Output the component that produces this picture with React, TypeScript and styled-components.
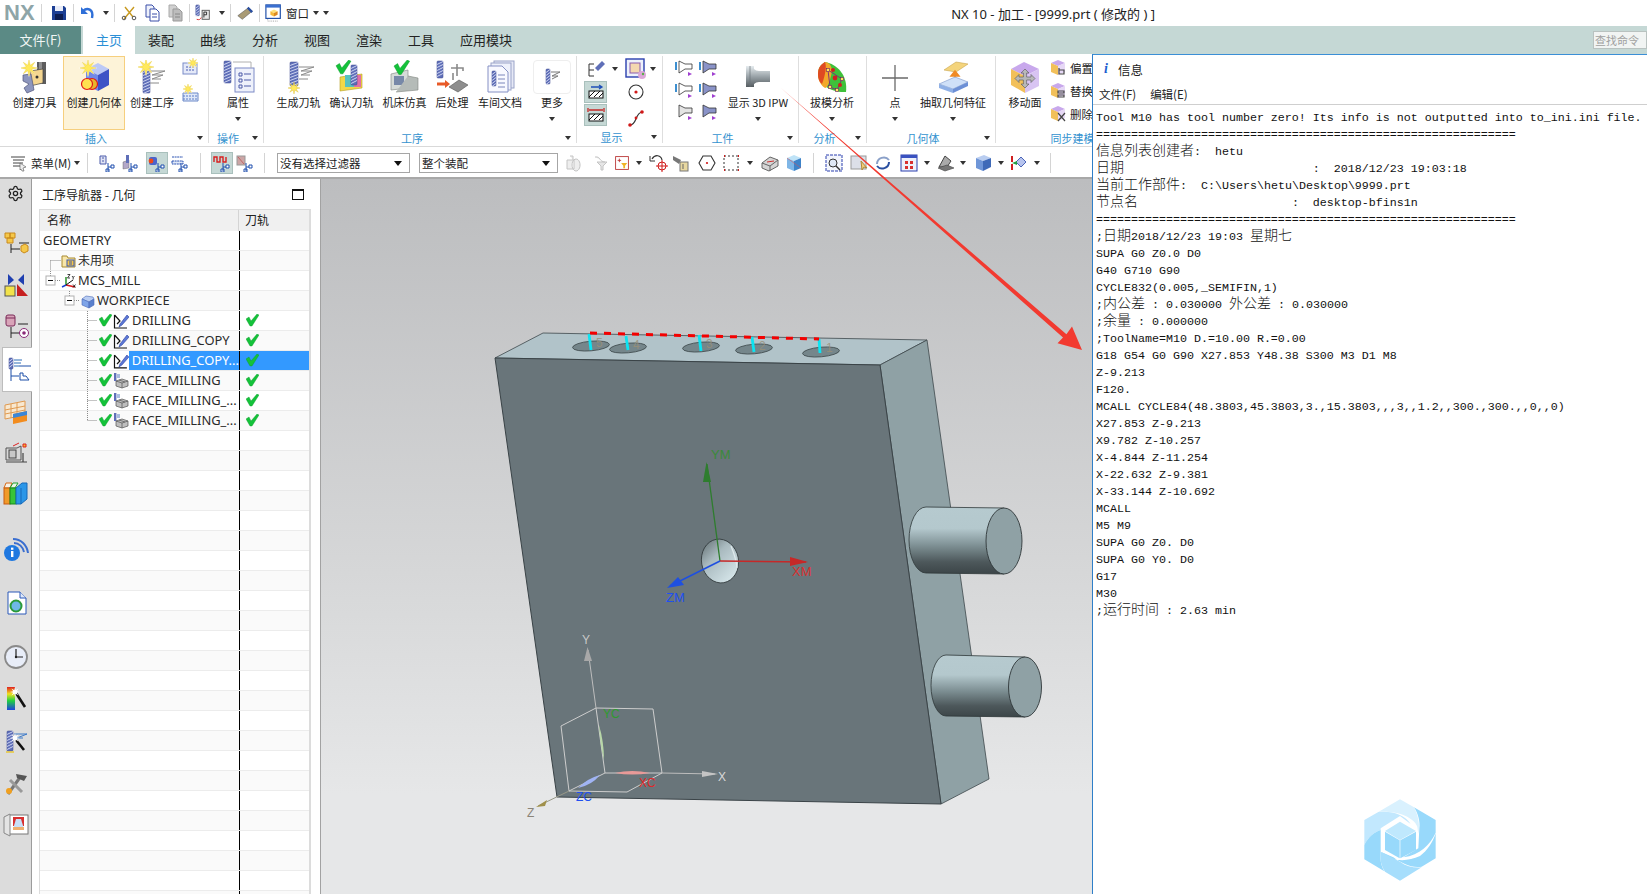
import React from "react";
import styled, { createGlobalStyle } from "styled-components";
import { Settings } from "lucide-react";

const Global = createGlobalStyle`
  html, body { margin: 0; padding: 0; background: #fff; overflow: hidden; }
  * { box-sizing: border-box; }
`;
const UI = `"Noto Sans CJK SC", "Liberation Sans", sans-serif`;

const Page = styled.div`
  position: relative; width: 1647px; height: 894px; overflow: hidden;
  display: flex; flex-direction: column; background: #fff; font-family: ${UI}; color: #222;
`;
/* title bar */
const TitleBar = styled.div`display: flex; align-items: center; height: 26px; flex: none; background: #fff;`;
const Logo = styled.div`width: 40px; padding-left: 4px; font: bold 22px/26px "Liberation Sans", sans-serif; color: #8ea5a8;`;
const Tool = styled.div<{ $w?: number; $ml?: number; $on?: boolean }>`
  flex: none; width: ${p => p.$w ?? 22}px; height: 22px; margin-left: ${p => p.$ml ?? 0}px;
  display: flex; align-items: center; justify-content: center;
  background: ${p => (p.$on ? "#c5d8d5" : "transparent")};
  border: 1px solid ${p => (p.$on ? "#a9c0bc" : "transparent")};
`;
const Sep = styled.div<{ $ml?: number; $h?: number }>`
  flex: none; width: 1px; height: ${p => p.$h ?? 18}px; margin-left: ${p => p.$ml ?? 0}px; background: #d4d4d4;
`;
const Caret = styled.span<{ $ml?: number }>`
  display: inline-block; flex: none; width: 0; height: 0; margin-left: ${p => p.$ml ?? 0}px;
  border-left: 3px solid transparent; border-right: 3px solid transparent; border-top: 4px solid #333;
`;
const QatText = styled.span`font-size: 11.5px; margin-left: 2px; line-height: 26px;`;
const Title = styled.div`margin-left: auto; padding-right: 492px; font: 13px "Noto Sans", "Noto Sans CJK SC", sans-serif; white-space: pre; color: #222;`;
/* tabs */
const TabRow = styled.div`display: flex; height: 28px; flex: none; background: #c5d8d5; align-items: flex-end;`;
const FileTab = styled.div`width: 81px; height: 28px; background: #5b8a85; color: #f2f6f5; font-size: 13px; line-height: 27px; text-align: center;`;
const Tab = styled.div<{ $on?: boolean }>`
  height: 28px; padding: 0 13px; margin-left: ${p => (p.$on ? 2 : 0)}px; font-size: 13px; line-height: 28px;
  background: ${p => (p.$on ? "#fff" : "transparent")}; color: ${p => (p.$on ? "#2b8fd6" : "#222")};
`;
const Search = styled.div`
  margin: 0 0 5px auto; width: 54px; height: 18px; border: 1px solid #b9c2c0; background: #f1f4f3;
  color: #a0a0a0; font-size: 11px; line-height: 16px; padding-left: 1px; white-space: nowrap; overflow: hidden;
`;
/* ribbon */
const Ribbon = styled.div`display: flex; height: 93px; flex: none; background: #fff; border-bottom: 1px solid #d9d9d9; padding-top: 2px; overflow: hidden;`;
const Group = styled.div<{ $w: number }>`
  flex: none; width: ${p => p.$w}px; height: 87px; display: flex; flex-direction: column; border-right: 1px solid #dedede;
`;
const GroupBody = styled.div<{ $pl?: number }>`display: flex; height: 74px; padding-left: ${p => p.$pl ?? 0}px;`;
const GroupFoot = styled.div`display: flex; align-items: center; height: 15px; font-size: 11px; color: #3392cf;`;
const FootText = styled.span`flex: 1; text-align: center; white-space: nowrap;`;
const FootCaret = styled.span`flex: none; width: 16px; display: flex; justify-content: center;`;
const BigBtn = styled.div<{ $w: number; $on?: boolean; $ml?: number }>`
  flex: none; width: ${p => p.$w}px; height: 74px; margin-left: ${p => p.$ml ?? 0}px; display: flex; flex-direction: column; align-items: center;
  padding-top: 3px; background: ${p => (p.$on ? "#fdf3d8" : "transparent")};
  border: 1px solid ${p => (p.$on ? "#f6cf7e" : "transparent")};
`;
const BigIcon = styled.div<{ $box?: boolean }>`
  width: ${p => (p.$box ? 38 : 34)}px; height: 34px; display: flex; align-items: center; justify-content: center;
  border: ${p => (p.$box ? "1px solid #eee" : "none")}; border-radius: 4px;
`;
const BigLabel = styled.div`font-size: 11px; line-height: 16px; white-space: nowrap;`;
const BtnCaret = styled.div`height: 12px; display: flex; align-items: center; justify-content: center; margin-top: 3px;`;
const SmallCol = styled.div<{ $w: number; $gap?: number; $pt?: number; $ml?: number; $start?: boolean }>`
  flex: none; width: ${p => p.$w}px; margin-left: ${p => p.$ml ?? 0}px; display: flex; flex-direction: column;
  align-items: ${p => (p.$start ? "flex-start" : "center")}; gap: ${p => p.$gap ?? 4}px; padding-top: ${p => p.$pt ?? 2}px;
`;
const SmallRow = styled.div`display: flex; align-items: center; height: 23px; font-size: 11.5px; white-space: nowrap; gap: 3px;`;
const ActiveCell = styled.div`
  width: 23px; height: 22px; background: #c5d8d5; border: 1px solid #a9c0bc; display: flex; align-items: center; justify-content: center;
`;
const Cell = styled.div<{ $mt?: number }>`width: 23px; height: 22px; margin-top: ${p => p.$mt ?? 0}px; display: flex; align-items: center; justify-content: center;`;
const SideCaret = styled(Caret)`margin-top: 11px;`;
/* toolbar */
const ToolBar = styled.div`display: flex; align-items: center; height: 32px; flex: none; background: #fff; border-bottom: 2px solid #a8a8a8; padding-top: 2px;`;
const MenuBtn = styled.div`flex: none; width: 86px; padding-left: 10px; display: flex; align-items: center; gap: 3px; font-size: 11.5px; white-space: nowrap;`;
const Select = styled.div<{ $w: number; $ml: number }>`
  flex: none; width: ${p => p.$w}px; height: 20px; margin-left: ${p => p.$ml}px; border: 1px solid #a6a6a6; background: #fff;
  font-size: 11.5px; line-height: 18px; padding: 0 7px 0 2px; display: flex; align-items: center; justify-content: space-between;
`;
const BlackCaret = styled(Caret)`border-left-width: 4px; border-right-width: 4px; border-top: 5px solid #111;`;
/* main */
const Main = styled.div`flex: 1; display: flex; min-height: 0;`;
const Side = styled.div`flex: none; width: 32px; background: #dcdcdc; border-right: 1px solid #9c9c9c; display: flex; flex-direction: column; align-items: stretch;`;
const SideItem = styled.div<{ $gap?: number; $on?: boolean }>`
  flex: none; height: ${p => (p.$on ? 45 : 28)}px; margin-top: ${p => p.$gap ?? 0}px; display: flex; align-items: center; justify-content: center;
  ${p => p.$on ? "background:#fff; margin-left:2px; margin-right:-1px; border:1px solid #bdbdbd; border-right:none;" : ""}
`;
const Panel = styled.div`flex: none; width: 288px; background: #fff; padding: 0 9px 0 7px; display: flex; flex-direction: column;`;
const PanelHead = styled.div`height: 30px; flex: none; display: flex; align-items: center; justify-content: space-between; padding: 0 7px 0 3px; font-size: 12px;`;
const MaxBox = styled.span`width: 12px; height: 11px; border: 1px solid #111; border-top-width: 2.5px; display: block;`;
const Table = styled.div`flex: 1; border: 1px solid #dcdcdc; overflow: hidden; min-height: 0; border-width: 1px 2px 0 1px;`;
const HeadRow = styled.div`display: flex; height: 21px; background: #f0f0f0; font-size: 12px; line-height: 20px;`;
const HeadName = styled.div`width: 199px; padding-left: 7px; border-right: 1px solid #d4d4d4;`;
const HeadPath = styled.div`padding-left: 6px;`;
const Row = styled.div<{ $alt: boolean }>`
  display: flex; height: 20px; background: ${p => (p.$alt ? "#fafafa" : "#fff")}; border-bottom: 1px solid #ececec;
`;
const NameCell = styled.div`flex: none; width: 200px; height: 19px; border-right: 1px solid #000; display: flex; align-items: center; white-space: nowrap; overflow: hidden;`;
const PathCell = styled.div<{ $sel?: boolean }>`flex: 1; height: 19px; display: flex; align-items: center; padding-left: 6px; background: ${p => (p.$sel ? "#3399ff" : "transparent")};`;
const Label = styled.div<{ $sel?: boolean; $ml?: number; $cjk?: boolean }>`
  margin-left: ${p => p.$ml ?? 1}px; padding-left: ${p => (p.$sel ? 3 : 0)}px; height: 19px; line-height: 18px;
  font: ${p => (p.$cjk ? `12px/18px "Noto Sans CJK SC", sans-serif` : `12.9px/18px "Noto Sans", "Noto Sans CJK SC", sans-serif`)};
  flex: ${p => (p.$sel ? 1 : "none")}; background: ${p => (p.$sel ? "#3399ff" : "transparent")}; color: ${p => (p.$sel ? "#fff" : "#2a2a2a")};
`;
const Viewport = styled.div`
  flex: 1; min-width: 0; border-left: 1px solid #a2a2a2; background: linear-gradient(#bcbdbf 0%, #d6d7d8 55%, #e6e7e8 86%, #e6e7e8 100%);
  display: flex;
`;
/* info window */
const InfoWin = styled.div`
  position: absolute; left: 1092px; top: 54px; right: 0; bottom: 0; background: #fff; border-left: 1px solid #2f7fc8; border-top: 1px solid #3b8fd6;
  display: flex; flex-direction: column;
`;
const InfoTitle = styled.div`height: 28px; flex: none; display: flex; align-items: center; padding-left: 11px; gap: 10px; font-size: 12.5px;`;
const InfoI = styled.span`font: italic bold 14px "Liberation Serif", serif; color: #1c5fd0;`;
const InfoMenu = styled.div`height: 22px; flex: none; display: flex; align-items: center; padding-left: 6px; gap: 14px; font-size: 11.5px; border-bottom: 1px solid #cfcfcf;`;
const InfoText = styled.div`flex: 1; padding: 5px 0 0 3px; font: 11.67px/17px "Liberation Mono", monospace; color: #111;`;
const Line = styled.div`height: 17px; white-space: pre; line-height: 17px;`;
const Cjk = styled.span`font: 14px/0 "Noto Sans CJK SC", sans-serif; font-weight: 300;`;
const Overlay = styled.svg`position: absolute; left: 0; top: 0; pointer-events: none;`;

const star = (cx: number, cy: number, r: number, n = 8) => {
  const p: string[] = [];
  for (let i = 0; i < n * 2; i++) {
    const a = (Math.PI * i) / n, k = i % 2 ? r * 0.38 : r;
    p.push(`${(cx + Math.cos(a) * k).toFixed(1)},${(cy + Math.sin(a) * k).toFixed(1)}`);
  }
  return p.join(" ");
};
const Star = ({ x, y, r = 8 }: { x: number; y: number; r?: number }) => (
  <g><polygon points={star(x, y, r + 1.5)} fill="#fff" /><polygon points={star(x, y, r)} fill="#ffe95c" stroke="#e8c93a" strokeWidth=".4" /></g>
);
const Bit = ({ x, y, w = 6, h = 22 }: { x: number; y: number; w?: number; h?: number }) => {
  const l = [];
  for (let i = 2; i < h; i += 3) l.push(<path key={i} d={`M${x} ${y + i + 1.5}L${x + w} ${y + i - 1.5}`} stroke="#d8def6" strokeWidth=".9" />);
  return <g><rect x={x} y={y} width={w} height={h} rx="1" fill="#5f6fb8" stroke="#39468c" strokeWidth=".5" />{l}</g>;
};
const Tick = ({ x, y, s = 1 }: { x: number; y: number; s?: number }) => (
  <path transform={`translate(${x} ${y}) scale(${s})`} d="M0 5 L3 3 L5 7 L11 0 L13 1 L6 12 L4 12 Z" fill="#14c23a" stroke="#0c9a2a" strokeWidth=".4" />
);
const Lines = ({ x, y }: { x: number; y: number }) => (
  <path transform={`translate(${x} ${y})`} d="M0 1H15L2 5H13L2 9H11M0 13H9" fill="none" stroke="#8a8a8a" strokeWidth="1" />
);
const V = ({ s = 34, b = 34, children }: { s?: number; b?: number; children: React.ReactNode }) => (
  <svg width={s} height={s} viewBox={`0 0 ${b} ${b}`}>{children}</svg>
);

/* ribbon big icons */
const ICreateTool = () => (<V>
  <rect x="19" y="2" width="9" height="22" fill="#5d5d5d" /><rect x="21" y="2" width="3" height="22" fill="#8e8e8e" />
  <polygon points="12,11 25,9 25,23 12,26" fill="#f3d590" stroke="#444" strokeWidth=".7" /><circle cx="19" cy="17" r="1.5" fill="#333" />
  <path d="M5 15 L13 14 L16 30 L9 33 L6 28 L11 24 L5 21Z" fill="#8d96bd" stroke="#50557a" strokeWidth=".7" />
  <Star x={11} y={8} />
</V>);
const ICreateGeom = () => (<V>
  <polygon points="9,9 21,3 32,9 21,15" fill="#bcc9f6" /><polygon points="9,9 21,15 21,31 9,25" fill="#7188e8" /><polygon points="21,15 32,9 32,25 21,31" fill="#3e53c6" />
  <Star x={11} y={8} />
  <circle cx="15" cy="24" r="5.5" fill="#e8b52a" stroke="#e01818" strokeWidth="1.2" /><circle cx="10" cy="24" r="5.5" fill="#ffe14f" stroke="#e01818" strokeWidth="1.2" />
</V>);
const ICreateOp = () => (<V><Bit x={8} y={6} w={7} h={27} /><Lines x={15} y={10} /><Star x={11} y={7} /></V>);
const IAttr = () => (<V>
  <rect x="14" y="8" width="19" height="24" fill="#eef1fb" stroke="#7d8ac6" />
  <path d="M18 13h3v3h-3zM18 19h3v3h-3zM18 25h3v3h-3zM23 14h7M23 20h7M23 26h7" fill="none" stroke="#4d5aa8" />
  <path d="M12 2H30V8" fill="none" stroke="#b0b0b0" /><Bit x={3} y={1} w={7} h={22} />
</V>);
const IGen = () => (<V><Bit x={8} y={2} w={8} h={24} /><Lines x={17} y={6} /><polygon points={star(12, 28, 6)} fill="#ffe95c" stroke="#d8b830" strokeWidth=".4" /></V>);
const IVerify = () => (<V>
  <polygon points="5,17 27,14 27,28 5,31" fill="#f2d848" stroke="#b79f20" strokeWidth=".6" /><rect x="10" y="15" width="14" height="12" fill="#58c2c0" /><rect x="19" y="15" width="7" height="12" fill="#e070a8" />
  <Bit x={16} y={5} w={6} h={20} /><Tick x={1} y={0} s={1.15} />
</V>);
const ISim = () => (<V>
  <polygon points="3,14 20,10 20,28 3,30" fill="#d6dbd8" stroke="#8b918e" strokeWidth=".7" /><rect x="6" y="16" width="10" height="9" fill="#7788a8" /><path d="M20 16 L30 18 L30 30 L8 32" fill="#b5bbb8" stroke="#80857f" strokeWidth=".6" />
  <Tick x={6} y={0} s={1.2} />
</V>);
const IPost = () => (<V>
  <Bit x={2} y={1} w={6} h={17} /><path d="M2 24h9" stroke="#e85a28" strokeWidth="3" /><path d="M10 20l5 4-5 4z" fill="#e85a28" />
  <path d="M16 8h12v3M22 4v12M18 13v7" fill="none" stroke="#8a8a8a" strokeWidth="1.6" /><polygon points="14,27 24,20 33,25 23,32" fill="#8e8e8e" stroke="#555" strokeWidth=".6" />
</V>);
const IDoc = () => (<V>
  <rect x="11" y="1" width="20" height="27" fill="#e6e9f6" stroke="#9aa3c8" /><rect x="8" y="3" width="20" height="27" fill="#eef1fb" stroke="#9aa3c8" />
  <path d="M5 6h14l6 6v20H5z" fill="#f8f9ff" stroke="#8590c4" /><Bit x={9} y={11} w={4} h={15} /><path d="M15 15h7M15 19h7M15 23h7M15 27h7" stroke="#7b86bb" />
</V>);
const IMore = () => (<V s={22} b={22}><Bit x={5} y={3} w={4} h={15} /><path d="M10 6H19L11 10H17L11 13" fill="none" stroke="#777" /></V>);
const IIpw = () => (<V>
  <defs><linearGradient id="ipw" x1="0" y1="0" x2="0" y2="1"><stop offset="0" stopColor="#e6ecef" /><stop offset=".5" stopColor="#9aa3a8" /><stop offset="1" stopColor="#555c60" /></linearGradient></defs>
  <path d="M5 6 H13 V9 Q15 11 18 11 H29 V22 H18 Q15 22 13 24 V27 H5 Z" fill="url(#ipw)" /><path d="M9 6V27" stroke="#6a7378" strokeWidth=".7" />
</V>);
const IDraft = () => (<V>
  <path d="M10 2 C22 4 33 15 31 32 C16 33 3 24 3 14 C3 9 5 5 10 2Z" fill="#3fc03a" /><path d="M10 2 C16 3 18 8 16 16 C14 24 12 28 10 28 C4 24 3 18 3 14 C3 9 5 5 10 2Z" fill="#f2a82a" /><path d="M10 2C12 6 10 16 7 24C4 22 3 18 3 14C3 9 5 5 10 2Z" fill="#df4a22" />
  <path d="M13 10L27 19L22 30L15 27Z" fill="none" stroke="#7a2a7a" strokeWidth=".9" />
  {[[13, 10], [27, 19], [22, 30], [15, 27]].map(([x, y]) => <rect key={x} x={x - 1.5} y={y - 1.5} width="3" height="3" fill="#ffe95c" stroke="#6a1a6a" strokeWidth=".6" />)}
  <circle cx="20" cy="18" r="2.4" fill="#d02020" /><circle cx="25" cy="25" r="2" fill="#d02020" /><circle cx="18" cy="10" r="2" fill="#d02020" />
</V>);
const IPoint = () => (<V><path d="M17 5V31M4 18H30" stroke="#6a6a6a" strokeWidth="1.3" fill="none" /></V>);
const IExtract = () => (<V>
  <polygon points="8,10 20,2 32,4 20,12" fill="#f4d47c" stroke="#c9a44a" strokeWidth=".6" /><path d="M19 23V13M15 16l4-5 4 5z" fill="#f08a24" stroke="#f08a24" strokeWidth="1.5" />
  <polygon points="3,24 19,17 32,22 17,29" fill="#cfe0f8" stroke="#7a96c8" strokeWidth=".6" /><polygon points="3,24 17,29 17,33 3,28" fill="#8fb0e6" /><polygon points="17,29 32,22 32,26 17,33" fill="#6d90d6" />
</V>);
const IMove = () => (<V>
  <polygon points="3,9 16,2 31,9 17,16" fill="#c8a8ec" /><polygon points="3,9 17,16 17,33 3,25" fill="#f2c05a" /><polygon points="17,16 31,9 31,26 17,33" fill="#d8c4f2" />
  <path d="M17 9l4 4h-2.4v4H23v-2.5l4 4-4 4V20h-4.4v4H21l-4 4-4-4h2.4v-4H11v2.5l-4-4 4-4V17h4.4v-4H13z" fill="#b8b8b8" stroke="#555" strokeWidth=".6" />
</V>);
const ISyncS = ({ mark }: { mark: string }) => (<V s={17} b={17}>
  <polygon points="1,4 8,1 15,4 8,7" fill="#c8a8ec" /><polygon points="1,4 8,7 8,16 1,13" fill="#f2c05a" /><polygon points="8,7 15,4 15,13 8,16" fill="#e6d8f6" />
  <path d={mark} fill="none" stroke="#444" strokeWidth="1.2" />
</V>);
/* small ribbon icons */
const IMini1 = () => (<V s={20} b={20}><rect x="2" y="6" width="14" height="11" fill="#e4e9f8" stroke="#7b8bc8" /><path d="M5 10h8M5 13h8" stroke="#4a5cb0" strokeDasharray="2 1" /><Star x={12} y={6} r={5} /></V>);
const IMini2 = () => (<V s={20} b={20}><path d="M2 10H17V18H2Z" fill="#dfe8f8" stroke="#6a88c8" /><path d="M2 13H17M2 16H17" stroke="#5a7cc8" strokeDasharray="2 1" /><Star x={7} y={6} r={5} /></V>);
const IShow1 = () => (<V s={20} b={20}><path d="M8 5H3V11H8M3 11V17H8" fill="none" stroke="#333" /><path d="M9 9L16 2L19 5L12 12Z" fill="#5f6fb8" /></V>);
const IShow2 = () => (<V s={22} b={22}><rect x="1" y="1" width="18" height="18" fill="#eef2fb" stroke="#2a3fae" strokeWidth="1.4" /><rect x="5" y="5" width="10" height="10" fill="#f4d8b0" stroke="#8a5ab0" /><circle cx="17" cy="17" r="4" fill="#dca8d8" /><circle cx="18" cy="16" r="1.2" fill="#58b048" /></V>);
const IHatch = ({ arrow }: { arrow: string }) => (<V s={20} b={20}>
  <path d={arrow} fill="none" stroke={arrow.startsWith("M2 3") ? "#c62828" : "#1e4fb8"} strokeWidth="1.3" />
  <rect x="3" y="9" width="14" height="7" fill="#fff" stroke="#111" /><path d="M3 15l6-6M8 15l6-6M13 15l4-4" stroke="#111" />
</V>);
const ICircle = () => (<V s={20} b={20}><circle cx="10" cy="10" r="7" fill="#fff" stroke="#333" strokeWidth="1.1" /><circle cx="10" cy="10" r="1.6" fill="#d01818" /></V>);
const ICurve = () => (<V s={20} b={20}><path d="M4 17C11 17 9 5 16 4" fill="none" stroke="#333" strokeWidth="1.2" /><circle cx="4" cy="17" r="1.8" fill="#d01818" /><circle cx="16" cy="4" r="1.8" fill="#d01818" /><circle cx="10" cy="10" r="1.4" fill="#d01818" /></V>);
const IWork = ({ c, t }: { c: string; t?: boolean }) => (<V s={20} b={20}>
  {t && <path d="M1 4V12" stroke="#3d8fd0" strokeWidth="2" />}
  <path d="M4 3L10 6H17V11H10L4 15Z" fill={c} stroke="#333" strokeWidth=".8" /><path d="M13 14l4 2-4 2z" fill="#a040d0" />
</V>);
/* toolbar icons */
const Nodes = ({ x = 8, y = 9 }: { x?: number; y?: number }) => (
  <path transform={`translate(${x} ${y})`} d="M2 0V8M2 4H5M0 6h3v3h-3zM5 2h3v3h-3z" fill="#fff" stroke="#1f4fae" />
);
const TTree = ({ kind }: { kind: number }) => (<V s={18} b={18}>
  {kind === 0 && <path d="M2 2h6v8H2zM4 4h2M4 7h2" fill="#dfe3f4" stroke="#4c5cab" />}
  {kind === 1 && <g><polygon points="2,8 8,6 8,14 2,15" fill="#b3a8c8" stroke="#555" strokeWidth=".4" /><rect x="5" y="1" width="3" height="8" fill="#5f6fb8" /></g>}
  {kind === 2 && <g><rect x="1" y="3" width="8" height="8" rx="2" fill="#4a64cc" /><circle cx="3" cy="7" r="2.4" fill="#f04818" /></g>}
  {kind === 3 && <path d="M1 3H12M1 7H12V10H1Z" fill="#dfe8f8" stroke="#2b52b2" strokeDasharray="2 .6" />}
  {kind === 4 && <path d="M1 8V3H4V8H7V3H10V8H13V3" fill="none" stroke="#d82020" strokeWidth="1.4" />}
  {kind === 5 && <g opacity=".75"><rect x="1" y="2" width="8" height="9" fill="#b88" stroke="#777" /><path d="M2 3l6 7" stroke="#a33" /></g>}
  <Nodes />
</V>);
const TGray1 = () => (<V s={18} b={18}><path d="M2 6h7v9H2zM5 2h3v4M11 5a4 6 0 1 0 .1 0" fill="#eee" stroke="#c4c4c4" /></V>);
const TGray2 = () => (<V s={18} b={18}><path d="M2 3C8 2 6 8 12 8M14 8H4L8 12V16H10V12Z" fill="#e6e6e6" stroke="#c4c4c4" /></V>);
const TFilter = () => (<V s={16} b={16}><rect x=".7" y=".7" width="14.6" height="14.6" fill="#fff" stroke="#b83232" /><path d="M3 5h4M5 3v4" stroke="#b83232" /><path d="M7 8H14L11.5 11V14H9.5V11Z" fill="#f0b428" /></V>);
const TUndoPick = () => (<V s={20} b={20}><path d="M3 6C6 1 12 2 13 7" fill="none" stroke="#333" strokeWidth="1.2" /><path d="M1 3v5h5" fill="none" stroke="#333" /><circle cx="13" cy="13" r="4" fill="none" stroke="#d01818" /><path d="M13 7v12M7 13h12" stroke="#d01818" /></V>);
const TBits = () => (<V s={20} b={20}><path d="M2 3L10 7L8 11L2 7Z" fill="#777" /><rect x="9" y="9" width="8" height="9" fill="#e8d8a0" stroke="#777" /><path d="M12 11v5" stroke="#666" /></V>);
const THex = () => (<V s={18} b={18}><polygon points="5,2 13,2 17,9 13,16 5,16 1,9" fill="#fff" stroke="#333" strokeWidth="1.1" /><circle cx="9" cy="9" r="1.1" fill="#d01818" /></V>);
const TDash = () => (<V s={18} b={18}><rect x="2" y="2" width="14" height="14" fill="none" stroke="#333" strokeDasharray="2 2" /><path d="M2 2h1M16 2h1M2 16h1M16 16h1" stroke="#d01818" strokeWidth="2" /></V>);
const TBox = () => (<V s={20} b={20}><polygon points="2,10 10,4 18,7 18,13 9,18 2,15" fill="#d4d4d4" stroke="#666" /><path d="M2 10L10 13L18 7M10 13V18" stroke="#666" fill="none" /><path d="M7 9L14 8" stroke="#cc3333" /></V>);
const TCube = () => (<V s={20} b={20}><polygon points="3,5 10,2 17,5 10,8" fill="#bfe3f7" /><polygon points="3,5 10,8 10,18 3,15" fill="#7fb6e6" /><polygon points="10,8 17,5 17,15 10,18" fill="#3d83c9" /><path d="M3 5L17 15" stroke="#e05050" strokeWidth=".5" /></V>);
const TFit = () => (<V s={20} b={20}><rect x="2" y="2" width="16" height="16" fill="#f2f5fc" stroke="#2a3fae" strokeDasharray="3 1" /><circle cx="9" cy="10" r="4" fill="#dfe8f6" stroke="#333" /><path d="M12 13l4 4" stroke="#333" strokeWidth="1.4" /></V>);
const TZoom = () => (<V s={20} b={20}><rect x="2" y="3" width="15" height="13" fill="#dcdfe8" stroke="#9a9a9a" /><path d="M12 8l1 9 2-3 3 1z" fill="#f3cc7a" stroke="#b08a3a" /></V>);
const TRot = () => (<V s={20} b={20}><path d="M4 11C4 5 12 2 16 7" fill="none" stroke="#8aa0c8" strokeWidth="2" /><path d="M16 9C16 15 8 18 4 13" fill="none" stroke="#2a4fa0" strokeWidth="2" /></V>);
const TGrid = () => (<V s={20} b={20}><rect x="2" y="2" width="16" height="16" fill="#eef1fb" stroke="#2a3fae" /><rect x="2" y="2" width="16" height="3" fill="#3a52c0" /><path d="M6 8h3v3H6zM11 8h3v3h-3zM6 13h3v3H6zM11 13h3v3h-3z" fill="#d83030" /></V>);
const TShade = () => (<V s={20} b={20}><polygon points="3,14 9,3 15,8 11,14" fill="#aaa" stroke="#444" /><polygon points="2,15 11,12 18,15 9,18" fill="#777" stroke="#444" strokeWidth=".6" /></V>);
const TBlue = () => (<V s={20} b={20}><polygon points="3,5 11,2 18,5 10,8" fill="#b9cdf0" /><polygon points="3,5 10,8 10,18 3,15" fill="#6f96d8" /><polygon points="10,8 18,5 18,14 10,18" fill="#3f6ab8" /></V>);
const TMark = () => (<V s={20} b={20}><polygon points="7,9 12,4 17,9 12,14" fill="#b7c4ee" stroke="#4a64b8" /><path d="M3 3v6M3 11v6" stroke="#d02020" strokeWidth="2" /><path d="M3 10l5 -2v4z" fill="#20a040" /></V>);
const TMenu = () => (<V s={18} b={18}><path d="M1 3H15M3 6H14M3 9H13M3 12H11" stroke="#444" /><polygon points="10,9 16,13 13,14 14,17 12,17 11,15 10,16" fill="#eee" stroke="#555" strokeWidth=".6" /></V>);
/* qat */
const QSave = () => (<V s={18} b={18}><path d="M2 2H14L16 4V16H2Z" fill="#1c3f94" /><rect x="5" y="2" width="8" height="5" fill="#e8ecf8" /><rect x="5" y="10" width="8" height="6" fill="#0d1d50" /></V>);
const QUndo = () => (<V s={18} b={18}><path d="M4 7C8 3 15 5 13 14" fill="none" stroke="#2f6fd8" strokeWidth="2.4" /><path d="M2 3V10H9Z" fill="#2f6fd8" /></V>);
const QCut = () => (<V s={18} b={18}><path d="M4 15L14 3M5 3L13 13" stroke="#c89a20" strokeWidth="1.4" /><circle cx="4" cy="14" r="1.8" fill="none" stroke="#555" /><circle cx="14" cy="14" r="1.8" fill="none" stroke="#555" /></V>);
const QCopy = ({ g }: { g?: boolean }) => (<V s={18} b={18}><path d="M3 1H9L11 3V13H3Z" fill={g ? "#d0d0d0" : "#eef1fb"} stroke={g ? "#aaa" : "#3a4fa8"} /><path d="M7 5H13L16 8V17H7Z" fill={g ? "#bdbdbd" : "#fff"} stroke={g ? "#999" : "#3a4fa8"} /><path d="M9 10h5M9 13h5" stroke={g ? "#888" : "#3a4fa8"} /></V>);
const QPart = () => (<V s={20} b={20}><Bit x={2} y={1} w={4} h={12} /><path d="M3 17c3 1 4 0 5-2" stroke="#d82020" fill="none" /><rect x="9" y="7" width="8" height="10" fill="#e8e8e8" stroke="#555" /><path d="M11 9v6M11 9h3v3h-3" stroke="#222" fill="none" /></V>);
const QTube = () => (<V s={20} b={20}><path d="M2 13L14 4L18 8L7 17Z" fill="#a99b75" stroke="#555" strokeWidth=".6" /><path d="M13 4l5 5" stroke="#2a4fa0" strokeWidth="2.5" /></V>);
const QWin = () => (<V s={20} b={20}><rect x="1" y="1" width="16" height="15" fill="#fff" stroke="#1f4fa8" strokeWidth="1.3" /><rect x="1" y="1" width="16" height="3" fill="#3a6fd0" /><polygon points="6,8 10,6 14,8 10,10" fill="#ffe27a" /><polygon points="6,8 10,10 10,14 6,12" fill="#f5b93a" /><polygon points="10,10 14,8 14,12 10,14" fill="#dd8a1e" /><path d="M3 17v2h12" stroke="#999" strokeDasharray="1 1" fill="none" /></V>);
/* side icons */
const SOps = () => (<V s={26} b={26}><path d="M2 3h5v5H2zM7 3h5v5H7zM4 8h6v5H4z" fill="#f5c84a" stroke="#c98a1c" /><path d="M8 14V23M8 19H17M16 13H26" stroke="#222" fill="none" /><polygon points="18,16 22,14 25,16 25,21 21,23 18,21" fill="#f5c84a" stroke="#c98a1c" /></V>);
const SMirror = () => (<V s={26} b={26}><polygon points="5,2 11,8 5,13" fill="#1f3fb0" /><polygon points="21,2 15,8 21,13" fill="#1f3fb0" /><rect x="2" y="14" width="10" height="10" fill="#f2e24a" stroke="#555" /><polygon points="14,24 14,12 25,24" fill="#c62020" /></V>);
const STool = () => (<V s={26} b={26}><rect x="3" y="1" width="9" height="11" rx="2" fill="#d8a4b8" stroke="#7a2a58" /><path d="M3 4h9" stroke="#7a2a58" /><path d="M8 13V24M8 19H17M15 10H25" stroke="#222" fill="none" /><circle cx="21" cy="19" r="4.5" fill="#fff" stroke="#8a2a78" /><circle cx="21" cy="19" r="1.8" fill="#8a2a78" /></V>);
const SProg = () => (<V s={26} b={26}><Bit x={4} y={1} w={4} h={11} /><path d="M9 3h8M9 6h7M9 9h5" stroke="#2e6fb8" /><path d="M6 12V24M6 19H14M14 9H26" stroke="#1d4fa8" fill="none" /><path d="M15 16v7h9l-3-4h-3v-3z" fill="#fff" stroke="#1d4fa8" /></V>);
const SFeat = () => (<V s={26} b={26}><path d="M2 6L22 2V16L2 20Z" fill="#f8e8d0" stroke="#e09a50" /><path d="M2 11L22 7M2 15L22 11M8 5V19M14 4V18" stroke="#e09a50" /><polygon points="10,15 24,12 24,22 10,25" fill="#f28c1e" /><polygon points="10,15 24,12 24,16 10,19" fill="#3a86d8" /></V>);
const SMach = () => (<V s={26} b={26}><path d="M3 8H14L18 6V20H3Z" fill="#d8d8d8" stroke="#555" /><rect x="6" y="10" width="7" height="8" fill="#c8c8c8" stroke="#444" /><path d="M20 13V22H24M3 22H20" stroke="#444" strokeWidth="1.2" fill="none" /><path d="M10 6L16 3M20 4h3v3h-3z" fill="#f4b428" stroke="#d22" /></V>);
const SBooks = () => (<V s={26} b={26}><polygon points="1,6 3,1 9,1 7,6" fill="#f6f2e8" stroke="#d86a18" /><rect x="1" y="6" width="6" height="16" fill="#f09a2a" stroke="#c85a10" /><polygon points="7,6 10,1 15,1 12,6" fill="#eaf6e8" stroke="#20a030" /><rect x="7" y="6" width="6" height="16" fill="#38c438" stroke="#168a1a" /><polygon points="13,6 19,1 24,1 24,17 18,22 13,22" fill="#2a96e8" stroke="#1668b8" /><path d="M18 6V22" stroke="#1668b8" /></V>);
const SInfo = () => (<V s={26} b={26}><path d="M10 3C18 3 24 9 25 17M11 7C16 7 20 11 21 16" fill="none" stroke="#3a6ed0" strokeWidth="2" /><circle cx="9" cy="17" r="8" fill="#1f78e0" /><rect x="8" y="15" width="2.4" height="6" fill="#fff" /><rect x="8" y="11.6" width="2.4" height="2.2" fill="#fff" /></V>);
const SWeb = () => (<V s={26} b={26}><path d="M5 2H17L23 8V24H5Z" fill="#fff" stroke="#2b58b8" /><path d="M17 2V8H23" fill="#dfe8f8" stroke="#2b58b8" /><circle cx="13" cy="16" r="5.5" fill="#6fb8e8" stroke="#2a9a3a" strokeWidth="2" /></V>);
const SClock = () => (<V s={26} b={26}><circle cx="13" cy="13" r="11" fill="#e8edf8" stroke="#8a8a8a" strokeWidth="1.8" /><path d="M13 5V13H20" fill="none" stroke="#222" strokeWidth="1.2" /><circle cx="13" cy="13" r="1.2" fill="#222" /></V>);
const SBar = () => (<V s={26} b={26}><defs><linearGradient id="spec" x1="0" y1="0" x2="0" y2="1"><stop offset="0" stopColor="#e02020" /><stop offset=".3" stopColor="#f0e020" /><stop offset=".6" stopColor="#20d040" /><stop offset="1" stopColor="#2040e0" /></linearGradient></defs><rect x="4" y="2" width="8" height="23" fill="url(#spec)" /><path d="M13 8L22 22" stroke="#111" strokeWidth="2.6" /><polygon points={star(12, 7, 5)} fill="#fff" /></V>);
const SWand = () => (<V s={26} b={26}><Bit x={4} y={2} w={6} h={20} /><path d="M11 5H24L14 9H20" fill="none" stroke="#3a78c8" /><path d="M13 11L21 21" stroke="#111" strokeWidth="2.6" /><polygon points={star(12, 9, 5)} fill="#fff" /><path d="M3 23h8" stroke="#e8c93a" strokeWidth="1.5" /></V>);
const STools = () => (<V s={26} b={26}><path d="M5 24L18 6" stroke="#777" strokeWidth="3" /><path d="M13 4L24 6L21 11L14 8Z" fill="#555" /><path d="M19 22L7 10" stroke="#999" strokeWidth="3" /><circle cx="6" cy="21" r="3" fill="#f0a020" /></V>);
const SDoor = () => (<V s={26} b={26}><rect x="6" y="3" width="19" height="19" fill="#fff" stroke="#777" /><polygon points="1,5 7,2 7,24 1,21" fill="#e4e4e4" stroke="#888" /><rect x="10" y="5" width="11" height="9" fill="#d83030" /><polygon points="13,7 18,7 21,17 10,17" fill="#c8e0f8" /><rect x="10" y="15" width="11" height="3" fill="#f0b070" /></V>);
/* tree icons */
const IFolder = () => (<V s={16} b={16}><path d="M1 3H6L7 5H14V14H1Z" fill="#f8e6a8" stroke="#a88a30" /><rect x="6" y="7" width="7" height="6" fill="#f5c648" stroke="#3a58b0" /><path d="M8 9h3M8 11h3" stroke="#3a58b0" /></V>);
const IMcs = () => (<V s={16} b={16}><path d="M5 12L5 4" stroke="#1a8a1a" strokeWidth="1.4" /><path d="M5 12L14 14" stroke="#d81818" strokeWidth="1.6" /><path d="M5 12L1 14" stroke="#1840d0" strokeWidth="1.4" /><path d="M5 12L12 7" stroke="#111" /><path d="M6.5 1.5h2.5L6.5 5H9M11 3l1.2 1.5L13.5 3M12.2 4.5V6.5M12 11.5l2.5 3M14.5 11.5l-2.5 3" fill="none" stroke="#111" strokeWidth=".8" /></V>);
const IWp = () => (<V s={16} b={16}><polygon points="2,6 6,3 13,4 14,6 9,9" fill="#b9cdf2" stroke="#4a6ab8" strokeWidth=".6" /><polygon points="2,6 9,9 9,15 2,12" fill="#7ea4e8" stroke="#4a6ab8" strokeWidth=".6" /><polygon points="9,9 14,6 14,12 9,15" fill="#5a80cc" stroke="#4a6ab8" strokeWidth=".6" /></V>);
const IDrillOp = () => (<V s={16} b={16}><path d="M1.5 2V15H14M1.5 2L7 8L4 11" fill="none" stroke="#111" strokeWidth="1.2" /><path d="M7 11L14 2L16 4L9 12L6 14Z" fill="#5c78d8" stroke="#2a3f9a" strokeWidth=".6" /></V>);
const IMillOp = () => (<V s={16} b={16}><rect x="1" y="0" width="2.4" height="8" fill="#5f6fb8" /><path d="M4 2h3M4 4h3" stroke="#2b58b8" strokeWidth=".8" /><polygon points="3,8 9,6 15,8 15,13 9,15 3,13" fill="#bdbdbd" stroke="#555" strokeWidth=".7" /><path d="M3 8L9 10L15 8M9 10V15M6 7L12 9" fill="none" stroke="#555" strokeWidth=".7" /></V>);
const CheckMark = () => (<V s={13} b={13}><Tick x={0} y={0} /></V>);
const Gap = styled.span`flex: none; width: 1px;`;

const GuideSvg = styled.svg`flex: none;`;
const Guide = ({ w, children }: { w: number; children: React.ReactNode }) => (
  <GuideSvg width={w} height={19} viewBox={`0 0 ${w} 19`}>{children}</GuideSvg>
);
const dot = { stroke: "#8a8a8a", strokeDasharray: "1 1", fill: "none" };
const Expander = ({ x }: { x: number }) => (
  <g><rect x={x - 4.5} y={5} width={9} height={9} fill="#fff" stroke="#b0b0b0" /><path d={`M${x - 2.5} 9.5H${x + 2.5}`} stroke="#111" /></g>
);

type R = { name: string; icon: "drill" | "mill"; last?: boolean; sel?: boolean };
const ops: R[] = [
  { name: "DRILLING", icon: "drill" },
  { name: "DRILLING_COPY", icon: "drill" },
  { name: "DRILLING_COPY...", icon: "drill", sel: true },
  { name: "FACE_MILLING", icon: "mill" },
  { name: "FACE_MILLING_...", icon: "mill" },
  { name: "FACE_MILLING_...", icon: "mill", last: true },
];
const Tree = () => {
  const rows: React.ReactNode[] = [
    <><Label $ml={3}>GEOMETRY</Label></>,
    <><Guide w={21}><path d="M10.5 9.5H21M10.5 9.5V19" {...dot} /></Guide><IFolder /><Label $cjk>未用项</Label></>,
    <><Guide w={21}><path d="M10.5 0V5M15 9.5H21" {...dot} /><Expander x={10.5} /></Guide><IMcs /><Label>MCS_MILL</Label></>,
    <><Guide w={40}><path d="M29.5 0V5M34 9.5H40" {...dot} /><Expander x={29.5} /></Guide><IWp /><Label>WORKPIECE</Label></>,
    ...ops.map(o => (
      <><Guide w={59}><path d={`M47.5 0V${o.last ? 9.5 : 19}M47.5 9.5H57`} {...dot} /></Guide><CheckMark /><Gap />{o.icon === "drill" ? <IDrillOp /> : <IMillOp />}<Label $sel={o.sel} $ml={o.sel ? 0 : 3}>{o.name}</Label></>
    )),
  ];
  const out = [];
  for (let i = 0; i < 34; i++) {
    const op = i >= 4 && i < 10 ? ops[i - 4] : null;
    out.push(
      <Row key={i} $alt={i % 2 === 1}>
        <NameCell>{rows[i]}</NameCell>
        <PathCell $sel={op?.sel}>{op && <CheckMark />}</PathCell>
      </Row>
    );
  }
  return <>{out}</>;
};

const infoLines = [
  "Tool M10 has tool number zero! Its info is not outputted into to_ini.ini file.",
  "=".repeat(60),
  "信息列表创建者:  hetu",
  "日期" + " ".repeat(27) + ":  2018/12/23 19:03:18",
  "当前工作部件:  C:\\Users\\hetu\\Desktop\\9999.prt",
  "节点名" + " ".repeat(22) + ":  desktop-bfins1n",
  "=".repeat(60),
  ";日期2018/12/23 19:03 星期七",
  "SUPA G0 Z0.0 D0",
  "G40 G710 G90",
  "CYCLE832(0.005,_SEMIFIN,1)",
  ";内公差 : 0.030000 外公差 : 0.030000",
  ";余量 : 0.000000",
  ";ToolName=M10 D.=10.00 R.=0.00",
  "G18 G54 G0 G90 X27.853 Y48.38 S300 M3 D1 M8",
  "Z-9.213",
  "F120.",
  "MCALL CYCLE84(48.3803,45.3803,3.,15.3803,,,3,,1.2,,300.,300.,,0,,0)",
  "X27.853 Z-9.213",
  "X9.782 Z-10.257",
  "X-4.844 Z-11.254",
  "X-22.632 Z-9.381",
  "X-33.144 Z-10.692",
  "MCALL",
  "M5 M9",
  "SUPA G0 Z0. D0",
  "SUPA G0 Y0. D0",
  "G17",
  "M30",
  ";运行时间 : 2.63 min",
];
const InfoLine = ({ text }: { text: string }) => (
  <Line>{text.split(/([\u4e00-\u9fff]+)/).map((s, i) => (i % 2 ? <Cjk key={i}>{s}</Cjk> : s))}</Line>
);

const Big = ({ w, label, icon, on, caret, ml, box }: { w: number; label: string; icon: React.ReactNode; on?: boolean; caret?: boolean; ml?: number; box?: boolean }) => (
  <BigBtn $w={w} $on={on} $ml={ml}>
    <BigIcon $box={box}>{icon}</BigIcon>
    <BigLabel>{label}</BigLabel>
    {caret && <BtnCaret><Caret /></BtnCaret>}
  </BigBtn>
);
const Foot = ({ text }: { text: string }) => (
  <GroupFoot><FootText>{text}</FootText><FootCaret><Caret /></FootCaret></GroupFoot>
);

const SceneSvg = styled.svg`display: block; flex: none;`;
const Scene = () => (
  <SceneSvg width={771} height={715} viewBox="321 179 771 715">
    <defs>
      <linearGradient id="cyl" x1="0" y1="0" x2="0" y2="1">
        <stop offset="0" stopColor="#b6cacf" /><stop offset=".32" stopColor="#b4c8cd" /><stop offset=".58" stopColor="#7d8f93" /><stop offset=".82" stopColor="#4d585b" /><stop offset="1" stopColor="#3c4548" />
      </linearGradient>
      <linearGradient id="hole" x1="0" y1="0" x2=".6" y2="1">
        <stop offset="0" stopColor="#5f6b6f" /><stop offset=".45" stopColor="#a9babf" /><stop offset="1" stopColor="#d2e2e6" />
      </linearGradient>
    </defs>
    <polygon points="495,358 543,333 927,340 880,365" fill="#b1c3c9" stroke="#3e484b" strokeWidth=".8" />
    <polygon points="880,365 927,340 989,779 941,804" fill="#8fa1a5" stroke="#3e484b" strokeWidth=".8" />
    <polygon points="495,358 880,365 941,804 557,797" fill="#69757a" stroke="#3a4347" strokeWidth="1" />
    {[[591, 346], [628, 348], [701, 347], [754, 349], [821, 352]].map(([x, y]) => (
      <ellipse key={x} cx={x} cy={y} rx="18.5" ry="4.8" transform={`rotate(-5 ${x} ${y})`} fill="#75868b" stroke="#3e484b" strokeWidth=".8" />
    ))}
    {[[589, 334, 591, 350, "5"], [626, 336, 628, 350, "4"], [699, 335, 701, 351, "3"], [752, 337, 754, 352, "2"], [819, 339, 820, 353, "1"]].map(([a, b, c, d, t]) => (
      <g key={String(t)}>
        <path d={`M${a} ${b}L${c} ${d}`} stroke="#0ce4f2" strokeWidth="2.8" />
        <text x={Number(a) + 7} y={Number(b) + 13} fontSize="12" fontFamily="Liberation Sans, sans-serif" fill="#9a9078" opacity=".8">{t}</text>
      </g>
    ))}
    <path d="M590 333L819 339" stroke="#f40000" strokeWidth="3" strokeDasharray="7 7" />
    <g>
      <path d="M926 507 L1004 508 L1004 574 L926 573 A17 33 0 0 1 926 507Z" fill="url(#cyl)" stroke="#2f3739" strokeWidth=".8" />
      <ellipse cx="1004" cy="541" rx="18" ry="33" fill="#8fa1a5" stroke="#2f3739" strokeWidth=".9" />
      <path d="M946 655 L1025 657 L1025 717 L946 716 A15 30.5 0 0 1 946 655Z" fill="url(#cyl)" stroke="#2f3739" strokeWidth=".8" />
      <ellipse cx="1025" cy="687" rx="16.5" ry="30" fill="#8fa1a5" stroke="#2f3739" strokeWidth=".9" />
    </g>
    <ellipse cx="720" cy="561" rx="18.5" ry="22" transform="rotate(-10 720 561)" fill="url(#hole)" stroke="#2f3739" strokeWidth=".8" />
    <path d="M731 546 Q736 558 737 568" fill="none" stroke="#dfe9ec" strokeWidth="1.2" />
    <path d="M720 561L707 464" stroke="#2e7d2e" strokeWidth="1.3" /><polygon points="706.5,462 703,482 711,482" fill="#2e7d2e" />
    <path d="M720 561L806 562" stroke="#c62828" strokeWidth="1.6" /><polygon points="808,562 790,557 790,566" fill="#c62828" />
    <path d="M720 561L670 586" stroke="#1f50e0" strokeWidth="1.6" /><polygon points="667,588 678,577 684,585" fill="#1f50e0" />
    <g fontFamily="Liberation Sans, sans-serif" fontSize="13">
      <text x="711" y="459" fill="#3b8a3b">YM</text><text x="792" y="576" fill="#d83030">XM</text><text x="666" y="602" fill="#1f50f0">ZM</text>
    </g>
    <g fill="none" stroke="#cdcdcd" strokeWidth="1">
      <path d="M596 708L653 709L662 773L605 773Z" /><path d="M596 708L561 726L569 791L605 773" /><path d="M569 791L627 792L662 773" />
      <path d="M596 708L588 650" stroke="#bdbdbd" /><path d="M662 773L715 774" stroke="#bdbdbd" /><path d="M569 791L538 806" stroke="#998" />
    </g>
    <polygon points="587.5,647 584,661 592,661" fill="#a8a8a8" /><polygon points="718,774 702,771 702,777" fill="#c4c4c4" /><polygon points="536,807 547,800 545,806" fill="#a0904a" />
    <path d="M599 725Q604 742 604 760Q600 745 599 725Z" fill="#b8d8a8" />
    <path d="M615 773Q632 769 650 773Q632 776 615 773Z" fill="#e89a98" />
    <path d="M578 788Q588 778 600 775Q592 785 578 788Z" fill="#a0b4f4" />
    <g fontFamily="Liberation Sans, sans-serif" fontSize="12">
      <text x="582" y="644" fill="#c8c8c8">Y</text><text x="718" y="781" fill="#d8d8d8">X</text><text x="527" y="817" fill="#8a8478">Z</text>
      <text x="603" y="718" fill="#2f9a2f">YC</text><text x="639" y="787" fill="#e02828">XC</text><text x="576" y="801" fill="#2050f0">ZC</text>
    </g>
  </SceneSvg>
);

export default function App() {
  return (
    <Page>
      <Global />
      <TitleBar>
        <Logo>NX</Logo>
        <Sep $ml={1} />
        <Tool $w={20} $ml={7}><QSave /></Tool>
        <Sep $ml={4} />
        <Tool $w={20} $ml={4}><QUndo /></Tool>
        <Caret $ml={5} />
        <Sep $ml={5} />
        <Tool $w={20} $ml={4}><QCut /></Tool>
        <Tool $w={20} $ml={3}><QCopy /></Tool>
        <Tool $w={20} $ml={3}><QCopy g /></Tool>
        <Sep $ml={4} />
        <Tool $w={20} $ml={3}><QPart /></Tool>
        <Caret $ml={6} />
        <Sep $ml={5} />
        <Tool $w={20} $ml={4}><QTube /></Tool>
        <Sep $ml={4} />
        <Tool $w={20} $ml={4}><QWin /></Tool>
        <QatText>窗口</QatText>
        <Caret $ml={4} />
        <Caret $ml={4} />
        <Title>NX 10 - 加工 - [9999.prt ( 修改的 ) ]</Title>
      </TitleBar>
      <TabRow>
        <FileTab>文件(F)</FileTab>
        <Tab $on>主页</Tab>
        {["装配", "曲线", "分析", "视图", "渲染", "工具", "应用模块"].map(t => <Tab key={t}>{t}</Tab>)}
        <Search>查找命令</Search>
      </TabRow>
      <Ribbon>
        <Group $w={209}>
          <GroupBody $pl={6}>
            <Big w={57} label="创建刀具" icon={<ICreateTool />} />
            <Big w={62} label="创建几何体" icon={<ICreateGeom />} on />
            <Big w={54} label="创建工序" icon={<ICreateOp />} />
            <SmallCol $w={24} $gap={6} $pt={1}><IMini1 /><IMini2 /></SmallCol>
          </GroupBody>
          <Foot text="插入" />
        </Group>
        <Group $w={55}>
          <GroupBody><Big w={54} ml={2} label="属性" icon={<IAttr />} caret /></GroupBody>
          <Foot text="操作" />
        </Group>
        <Group $w={313}>
          <GroupBody $pl={8}>
            <Big w={53} label="生成刀轨" icon={<IGen />} />
            <Big w={53} label="确认刀轨" icon={<IVerify />} />
            <Big w={53} label="机床仿真" icon={<ISim />} />
            <Big w={42} label="后处理" icon={<IPost />} />
            <Big w={54} label="车间文档" icon={<IDoc />} />
            <Big w={38} ml={6} label="更多" icon={<IMore />} caret box />
          </GroupBody>
          <Foot text="工序" />
        </Group>
        <Group $w={86}>
          <GroupBody $pl={7}>
            <SmallCol $w={23} $gap={1}><Cell><IShow1 /></Cell><ActiveCell><IHatch arrow="M5 5H15M13 3l3 2-3 2" /></ActiveCell><ActiveCell><IHatch arrow="M2 3V7M18 3V7M3 5H17" /></ActiveCell></SmallCol>
            <SideCaret $ml={5} />
            <SmallCol $w={23} $gap={1} $ml={6}><Cell><IShow2 /></Cell><Cell><ICircle /></Cell><Cell $mt={3}><ICurve /></Cell></SmallCol>
            <SideCaret $ml={3} />
          </GroupBody>
          <Foot text="显示" />
        </Group>
        <Group $w={136}>
          <GroupBody $pl={11}>
            <SmallCol $w={22} $gap={2}><IWork c="#fff" t /><IWork c="#fff" t /><IWork c="#e4e4e4" /></SmallCol>
            <SmallCol $w={26} $gap={2}><IWork c="#8a93c8" t /><IWork c="#8a93c8" t /><IWork c="#8a93c8" /></SmallCol>
            <Big w={72} label="显示 3D IPW" icon={<IIpw />} caret />
          </GroupBody>
          <Foot text="工件" />
        </Group>
        <Group $w={68}>
          <GroupBody><Big w={50} ml={8} label="拔模分析" icon={<IDraft />} caret /></GroupBody>
          <Foot text="分析" />
        </Group>
        <Group $w={129}>
          <GroupBody $pl={11}>
            <Big w={34} label="点" icon={<IPoint />} caret />
            <Big w={72} ml={5} label="抽取几何特征" icon={<IExtract />} caret />
          </GroupBody>
          <Foot text="几何体" />
        </Group>
        <Group $w={170}>
          <GroupBody $pl={7}>
            <Big w={44} label="移动面" icon={<IMove />} />
            <SmallCol $w={70} $gap={0} $pt={0} $ml={3} $start>
              <SmallRow><ISyncS mark="M9 9v6h5v-4H9" />偏置</SmallRow>
              <SmallRow><ISyncS mark="M8 9h6v2H8zM8 13h6v2H8z" />替换</SmallRow>
              <SmallRow><ISyncS mark="M8 8l7 8M15 8l-7 8" />删除</SmallRow>
            </SmallCol>
          </GroupBody>
          <Foot text="同步建模" />
        </Group>
      </Ribbon>
      <ToolBar>
        <MenuBtn><TMenu /><span>菜单(M)</span><Caret /></MenuBtn>
        <Sep $ml={1} $h={20} />
        <Tool $ml={8}><TTree kind={0} /></Tool>
        <Tool $ml={1}><TTree kind={1} /></Tool>
        <Tool $ml={5} $on><TTree kind={2} /></Tool>
        <Tool $ml={1}><TTree kind={3} /></Tool>
        <Sep $ml={9} $h={20} />
        <Tool $ml={10} $on><TTree kind={4} /></Tool>
        <Tool $ml={1}><TTree kind={5} /></Tool>
        <Sep $ml={8} $h={20} />
        <Select $w={133} $ml={12}>没有选择过滤器<BlackCaret /></Select>
        <Select $w={139} $ml={9}>整个装配<BlackCaret /></Select>
        <Tool $w={24} $ml={4}><TGray1 /></Tool>
        <Tool $w={24} $ml={4}><TGray2 /></Tool>
        <Tool $w={16}><TFilter /></Tool>
        <Caret $ml={6} />
        <Tool $ml={6}><TUndoPick /></Tool>
        <Tool><TBits /></Tool>
        <Tool $ml={4}><THex /></Tool>
        <Tool $ml={2}><TDash /></Tool>
        <Caret $ml={5} />
        <Tool $ml={6}><TBox /></Tool>
        <Tool $ml={2}><TCube /></Tool>
        <Sep $ml={8} $h={20} />
        <Tool $ml={9}><TFit /></Tool>
        <Tool $ml={3}><TZoom /></Tool>
        <Tool $ml={2}><TRot /></Tool>
        <Tool $ml={4}><TGrid /></Tool>
        <Caret $ml={4} />
        <Tool $ml={5}><TShade /></Tool>
        <Caret $ml={3} />
        <Tool $ml={6}><TBlue /></Tool>
        <Caret $ml={4} />
        <Tool $ml={4}><TMark /></Tool>
        <Caret $ml={4} />
        <Sep $ml={10} $h={20} />
      </ToolBar>
      <Main>
        <Side>
          <SideItem><Settings size={17} strokeWidth={1.8} color="#222" /></SideItem>
          <SideItem $gap={22}><SOps /></SideItem>
          <SideItem $gap={14}><SMirror /></SideItem>
          <SideItem $gap={14}><STool /></SideItem>
          <SideItem $gap={6} $on><SProg /></SideItem>
          <SideItem $gap={6}><SFeat /></SideItem>
          <SideItem $gap={13}><SMach /></SideItem>
          <SideItem $gap={14}><SBooks /></SideItem>
          <SideItem $gap={26}><SInfo /></SideItem>
          <SideItem $gap={26}><SWeb /></SideItem>
          <SideItem $gap={26}><SClock /></SideItem>
          <SideItem $gap={13}><SBar /></SideItem>
          <SideItem $gap={16}><SWand /></SideItem>
          <SideItem $gap={13}><STools /></SideItem>
          <SideItem $gap={14}><SDoor /></SideItem>
        </Side>
        <Panel>
          <PanelHead>工序导航器 - 几何<MaxBox /></PanelHead>
          <Table>
            <HeadRow><HeadName>名称</HeadName><HeadPath>刀轨</HeadPath></HeadRow>
            <Tree />
          </Table>
        </Panel>
        <Viewport><Scene /></Viewport>
      </Main>
      <InfoWin>
        <InfoTitle><InfoI>i</InfoI>信息</InfoTitle>
        <InfoMenu><span>文件(F)</span><span>编辑(E)</span></InfoMenu>
        <InfoText>{infoLines.map((l, i) => <InfoLine key={i} text={l} />)}</InfoText>
      </InfoWin>
      <Overlay width={1647} height={894} viewBox="0 0 1647 894">
        <polygon points="781,88 1066.4,334.2 1072,326.5 1082,350 1057.5,343.3 1063,337.6" fill="#f23a30" />
        <g transform="translate(1340 780) scale(.3333)">
          <path d="M73 120L115 96C160 92 195 105 212 132L180 108L122 145V150C105 155 85 170 73 195Z" fill="#c2e8fe" />
          <path d="M115 96L180 58L222 82C236 110 240 135 235 162L232 140C220 110 170 92 115 96Z" fill="#d9f1fe" />
          <path d="M222 82L287 120V158C270 195 240 225 190 232L235 205L238 145C241 125 234 100 222 82Z" fill="#98d9fb" />
          <path d="M287 160V235L245 260C215 265 185 250 160 232L122 215C160 248 200 245 240 228C262 212 278 188 287 160Z" fill="#98d9fb" />
          <path d="M245 262L180 302L135 275C122 255 120 235 122 215L180 245C200 260 225 265 245 262Z" fill="#a6defc" />
          <path d="M73 195C85 170 105 155 122 150V215C120 235 122 255 133 274L73 238Z" fill="#98d9fb" />
          <polygon points="180,125 228,153 180,180 135,153" fill="#bfe8fd" />
          <polygon points="135,155 179,181 179,235 135,210" fill="#98d9fb" />
          <polygon points="181,181 228,155 228,210 181,235" fill="#98d9fb" />
        </g>
      </Overlay>
    </Page>
  );
}
